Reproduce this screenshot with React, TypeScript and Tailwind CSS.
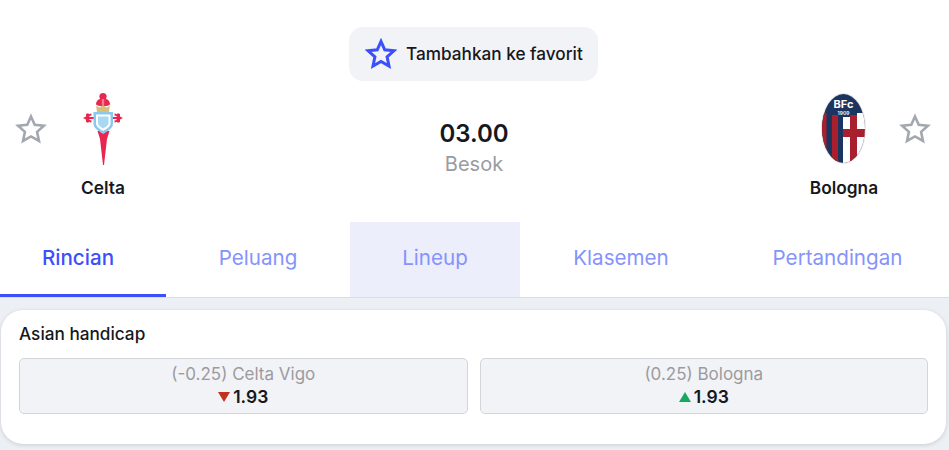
const font = { fontFamily: '"Inter", "Noto Sans", sans-serif' }

const Star = ({ className, stroke, width = 2.4 }: { className: string; stroke: string; width?: number }) => (
  <svg viewBox="0 0 30 30" className={className} fill="none">
    <path
      d="M15 3.2 18.5 11.1 27.1 12 20.7 17.7 22.5 26.2 15 21.9 7.5 26.2 9.3 17.7 2.9 12 11.5 11.1Z"
      stroke={stroke}
      strokeWidth={width}
      strokeLinejoin="miter"
    />
  </svg>
)

const CeltaLogo = () => (
  <svg viewBox="0 0 40 72" className="w-[40px] h-[72px]">
    {/* sword blade */}
    <path d="M14.5 38 26.5 38 24 46 21 72 20 72 17 46Z" fill="#e9264f" />
    {/* top of the cross */}
    <circle cx="20" cy="3.6" r="3.6" fill="#e9264f" />
    <path d="M13 11.5C13 7.5 16 5.5 20 5.5 24 5.5 27 7.5 27 11.5L24 13H16Z" fill="#e9264f" />
    <path d="M18.8 6h2.4v6h-2.4Z" fill="#f47a90" />
    {/* crown */}
    <path d="M14 19.5 13.2 12.5 16.5 14.5 20 12 23.5 14.5 26.8 12.5 26 19.5Z" fill="#d9bd79" />
    {/* cross arms */}
    <path
      d="M0 25 3 23.5 3 21 5 20.2 6.5 21.2 8.2 20.2 8.6 22.4 6.4 23 6.4 24 11 24 11 26 6.4 26 6.4 27 8.6 27.6 8.2 29.8 6.5 28.8 5 29.8 3 29 3 26.5Z"
      fill="#e9264f"
    />
    <path
      d="M40 25 37 23.5 37 21 35 20.2 33.5 21.2 31.8 20.2 31.4 22.4 33.6 23 33.6 24 29 24 29 26 33.6 26 33.6 27 31.4 27.6 31.8 29.8 33.5 28.8 35 29.8 37 29 37 26.5Z"
      fill="#e9264f"
    />
    {/* shield */}
    <path d="M10.5 19H30V31C30 35.5 24.5 38 20.2 41 16 38 10.5 35.5 10.5 31Z" fill="#8cc8ee" />
    <path d="M13 21.5H27.5V30.5C27.5 34 23.2 36 20.2 38 17.2 36 13 34 13 30.5Z" fill="#ffffff" />
    <path d="M15 23.5H25.5V30C25.5 32.6 22.4 34 20.2 35.5 18 34 15 32.6 15 30Z" fill="#a9d8f3" />
  </svg>
)

const BolognaLogo = () => (
  <svg viewBox="0 0 45 71" className="w-[45px] h-[71px]">
    <defs>
      <clipPath id="bfc-oval">
        <ellipse cx="22.5" cy="35.5" rx="21.5" ry="34.5" />
      </clipPath>
    </defs>
    <ellipse cx="22.5" cy="35.5" rx="22.5" ry="35.5" fill="#e6e6e6" />
    <g clipPath="url(#bfc-oval)">
      <rect x="0" y="0" width="45" height="71" fill="#1b3560" />
      <rect x="0" y="20" width="5.5" height="51" fill="#a81f2d" />
      <rect x="11" y="22" width="6" height="49" fill="#a81f2d" />
      <rect x="22" y="24" width="7" height="47" fill="#ffffff" />
      <rect x="29" y="22" width="7" height="49" fill="#a81f2d" />
      <rect x="36" y="20" width="9" height="51" fill="#ffffff" />
      <rect x="22" y="36" width="23" height="8" fill="#a81f2d" />
    </g>
    <text x="22.5" y="15" textAnchor="middle" fontSize="11" fontWeight="700" fill="#ffffff" style={font}>
      BFc
    </text>
    <text x="22.5" y="22" textAnchor="middle" fontSize="5" fontWeight="600" fill="#ffffff" style={font}>
      1909
    </text>
  </svg>
)

const Odds = ({ label, up }: { label: string; up: boolean }) => (
  <div className="flex-1 h-[56px] pb-[3px] rounded-[5px] border border-[#d3d5da] bg-[#f1f3f7] flex flex-col items-center justify-center">
    <div className="text-[17px] leading-[24px] text-[#9b9b9f]">{label}</div>
    <div className="flex items-center gap-[3px] text-[17.5px] leading-[22px] font-semibold text-[#16181d]">
      <svg viewBox="0 0 12 10" className="w-[12px] h-[10px]">
        {up ? <path d="M6 0 12 10H0Z" fill="#16a765" /> : <path d="M0 0H12L6 10Z" fill="#c0341d" />}
      </svg>
      1.93
    </div>
  </div>
)

export default function App() {
  return (
    <div style={font} className="w-[949px] h-[450px] overflow-hidden bg-white text-[#16181d]">
      <div className="h-[222px] flex flex-col">
        <div className="flex justify-center pt-[27px] pr-[2px]">
          <div className="h-[54px] w-[249px] rounded-[14px] bg-[#f1f3f7] flex items-center pl-[16px] gap-[9px]">
            <Star className="w-[32px] h-[32px]" stroke="#3b4ffb" width={2.8} />
            <span className="text-[17.2px] font-medium whitespace-nowrap">Tambahkan ke favorit</span>
          </div>
        </div>
        <div className="flex justify-between pt-[12px]">
          <div className="flex items-start w-[159px] shrink-0">
            <div className="w-[47px] shrink-0 pl-[15px] pt-[20px]">
              <Star className="w-[32px] h-[32px]" stroke="#a3a7b0" />
            </div>
            <div className="w-[112px] shrink-0 flex flex-col items-center">
              <CeltaLogo />
              <span className="mt-[12px] text-[17.3px] leading-[22px] font-semibold">Celta</span>
            </div>
          </div>
          <div className="flex flex-col items-center pt-[25px] pr-[1px]">
            <span className="text-[24px] leading-[32px] font-semibold">03.00</span>
            <span className="text-[20px] leading-[28px] text-[#9b9b9f]">Besok</span>
          </div>
          <div className="flex items-start w-[159px] shrink-0">
            <div className="w-[108px] shrink-0 flex flex-col items-center">
              <BolognaLogo />
              <span className="mt-[13px] text-[17.3px] leading-[22px] font-semibold">Bologna</span>
            </div>
            <div className="pl-[1px] pt-[20px]">
              <Star className="w-[32px] h-[32px]" stroke="#a3a7b0" />
            </div>
          </div>
        </div>
      </div>

      <div className="h-[76px] flex border-b border-[#dcdee3] text-[20.6px] text-[#8593fb]">
        <div className="w-[166px] pr-[10px] flex items-center justify-center border-b-[3px] border-[#3b4ffb] text-[#3b4ffb] font-medium">Rincian</div>
        <div className="w-[184px] flex items-center justify-center border-b-[3px] border-transparent">Peluang</div>
        <div className="w-[170px] flex items-center justify-center border-b-[3px] border-transparent bg-[#eceefb]">Lineup</div>
        <div className="w-[202px] flex items-center justify-center border-b-[3px] border-transparent">Klasemen</div>
        <div className="w-[227px] pl-[4px] flex items-center justify-center border-b-[3px] border-transparent">Pertandingan</div>
      </div>

      <div className="h-[152px] bg-[#eceff4] px-[1px] pt-[12px]">
        <div className="w-[945px] h-[134px] rounded-[22px] bg-white shadow-[0_1px_4px_rgba(0,0,0,0.15)] px-[18px] pt-[13px]">
          <div className="text-[17.2px] leading-[22px] font-medium">Asian handicap</div>
          <div className="flex gap-[12px] mt-[13px]">
            <Odds label="(-0.25) Celta Vigo" up={false} />
            <Odds label="(0.25) Bologna" up={true} />
          </div>
        </div>
      </div>
    </div>
  )
}
